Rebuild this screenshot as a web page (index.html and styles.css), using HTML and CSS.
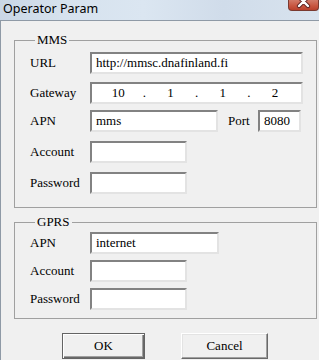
FILE: index.html
```html
<!DOCTYPE html>
<html>
<head>
<meta charset="utf-8">
<link rel="stylesheet" href="styles.css">
</head>
<body>
<div class="window">
  <div class="titlebar">
    <span class="title">Operator Param</span>
    <div class="close">
      <svg width="31" height="11" viewBox="0 0 31 11">
        <path d="M11 -3 L20 6 M20 -3 L11 6" stroke="#5a2020" stroke-width="4.2" stroke-linecap="round"/>
        <path d="M11 -3 L20 6 M20 -3 L11 6" stroke="#ffffff" stroke-width="2.4" stroke-linecap="round"/>
      </svg>
    </div>
  </div>
  <div class="client">
    <fieldset class="group group-mms">
      <legend>MMS</legend>
      <div class="row">
        <span class="label">URL</span>
        <div class="field field-url">http://mmsc.dnafinland.fi</div>
      </div>
      <div class="row row-gw">
        <span class="label">Gateway</span>
        <div class="field field-ip">
          <span class="seg">10</span><span class="dot">.</span><span class="seg">1</span><span class="dot">.</span><span class="seg">1</span><span class="dot">.</span><span class="seg">2</span>
        </div>
      </div>
      <div class="row row-apn">
        <span class="label">APN</span>
        <div class="field field-apn">mms</div>
        <span class="label-port">Port</span>
        <div class="field field-port">8080</div>
      </div>
      <div class="row row-acc">
        <span class="label">Account</span>
        <div class="field field-short"></div>
      </div>
      <div class="row row-pw">
        <span class="label">Password</span>
        <div class="field field-short"></div>
      </div>
    </fieldset>
    <fieldset class="group group-gprs">
      <legend>GPRS</legend>
      <div class="row">
        <span class="label">APN</span>
        <div class="field field-apn2">internet</div>
      </div>
      <div class="row row-g2">
        <span class="label">Account</span>
        <div class="field field-short"></div>
      </div>
      <div class="row row-g2">
        <span class="label">Password</span>
        <div class="field field-short"></div>
      </div>
    </fieldset>
    <div class="buttons">
      <div class="btn btn-default">OK</div>
      <div class="btn btn-cancel">Cancel</div>
    </div>
  </div>
</div>
</body>
</html>
```

FILE: styles.css
```css
html, body {
  margin: 0;
  padding: 0;
}
body {
  width: 319px;
  height: 360px;
  overflow: hidden;
  background: #f0f0f0;
}
.window {
  width: 319px;
  height: 360px;
  display: flex;
  flex-direction: column;
}
.titlebar {
  height: 20px;
  flex: none;
  display: flex;
  align-items: flex-start;
  background: linear-gradient(90deg, #cad7e5 0%, #d6e2ee 20%, #dbe6f1 45%, #d0dcea 70%, #d8e3ee 100%);
}
.title {
  font-family: "Noto Sans", "Open Sans", sans-serif;
  font-size: 12.5px;
  line-height: 16px;
  color: #000;
  padding: 1px 0 0 3px;
}
.close {
  margin-left: auto;
  width: 31px;
  height: 11px;
  border-radius: 0 0 4px 4px;
  background: linear-gradient(180deg, #d27a68 0%, #c8553f 60%, #b9412d 100%);
  border: 1px solid #7a3a30;
  border-top: none;
  box-sizing: border-box;
  overflow: hidden;
}
.close svg {
  display: block;
  margin-left: -1px;
}
.client {
  flex: 1;
  border-top: 1px solid #8f9aa6;
  border-left: 1px solid #8f9aa6;
  background: #f0f0f0;
  padding-left: 13px;
  font-family: "Liberation Serif", "Times New Roman", serif;
  font-size: 13px;
  color: #000;
}
.group {
  margin: 0;
  width: 303px;
  box-sizing: border-box;
  border: 1px solid #a0a0a0;
  padding: 0 0 0 15px;
}
.group legend {
  margin-left: 5px;
  padding: 0 2px;
  line-height: 16px;
  font-size: 13px;
}
.group-mms {
  margin-top: 11px;
  padding-top: 4px;
  padding-bottom: 13px;
}
.group-gprs {
  margin-top: 6px;
  padding-top: 2px;
  padding-bottom: 8px;
}
.row {
  display: flex;
  align-items: center;
  height: 22px;
}
.row-gw { margin-top: 8px; }
.row-apn { margin-top: 6px; }
.row-acc { margin-top: 9px; }
.row-pw { margin-top: 9px; }
.row-g2 { margin-top: 6px; }
.label {
  width: 60px;
  flex: none;
}
.field {
  box-sizing: border-box;
  height: 22px;
  border: 2px solid;
  border-color: #828282 #e3e3e3 #e3e3e3 #828282;
  background: #fff;
  padding: 0 4px;
  line-height: 18px;
  white-space: nowrap;
  overflow: hidden;
}
.field-url { width: 213px; }
.field-ip {
  width: 213px;
  display: flex;
  padding: 0;
}
.seg {
  flex: 1;
  text-align: center;
}
.dot {
  width: 0;
  display: flex;
  justify-content: center;
}
.field-apn { width: 128px; }
.label-port {
  margin-left: 10px;
  width: 30px;
}
.field-port { width: 43px; }
.field-short { width: 97px; }
.field-apn2 { width: 129px; }
.buttons {
  display: flex;
  margin-top: 14px;
  padding-left: 48px;
  gap: 36px;
}
.btn {
  box-sizing: border-box;
  height: 26px;
  border: 1px solid;
  border-color: #ffffff #696969 #696969 #ffffff;
  box-shadow: inset -1px -1px 0 #a0a0a0, inset 1px 1px 0 #e3e3e3;
  background: #f0f0f0;
  display: flex;
  align-items: center;
  justify-content: center;
}
.btn-default {
  width: 83px;
  border: 1px solid #646464;
  box-shadow: inset 1px 1px 0 #ffffff, inset -1px -1px 0 #696969, inset -2px -2px 0 #a0a0a0;
}
.btn-cancel { width: 87px; }
```
